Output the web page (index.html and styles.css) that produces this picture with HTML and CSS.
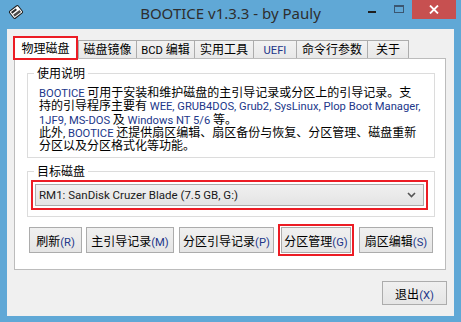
FILE: index.html
```html
<!DOCTYPE html>
<html lang="zh-CN">
<head>
  <meta charset="UTF-8">
  <title>BOOTICE v1.3.3 - by Pauly</title>
  <link rel="stylesheet" href="styles.css">
</head>
<body>

<div class="window">
  <div class="titlebar">
    <div class="tb-left">
      <svg class="app-icon" width="16" height="14" viewBox="0 0 16 14">
        <g transform="rotate(-38 8 7)">
          <rect x="2.5" y="2.5" width="11" height="9" rx="1.5" fill="#fff" stroke="#1d1d1d"/>
          <rect x="4" y="4" width="6" height="2" fill="#2a2a2a"/>
          <rect x="4" y="7.5" width="8" height="2.5" fill="#4a4a4a"/>
        </g>
      </svg>
    </div>
    <div class="title">BOOTICE v1.3.3 - by Pauly</div>
    <div class="controls">
      <span class="ctl min"><i></i></span>
      <span class="ctl max"><i></i></span>
      <span class="ctl close">
        <svg width="10" height="9" viewBox="0 0 10 9">
          <path d="M1 0.5 L9 8.5 M9 0.5 L1 8.5" stroke="#fff" stroke-width="1.8"/>
        </svg>
      </span>
    </div>
  </div>

  <div class="client">
    <div class="tabs">
      <div class="tab active">物理磁盘</div>
      <div class="tab t2">磁盘镜像</div>
      <div class="tab t3"><span class="en">BCD</span> 编辑</div>
      <div class="tab t4">实用工具</div>
      <div class="tab t5"><span class="lat">UEFI</span></div>
      <div class="tab t6">命令行参数</div>
      <div class="tab t7">关于</div>
    </div>

    <div class="panel">
      <fieldset class="group usage">
        <legend>使用说明</legend>
        <div class="desc">
          <div class="line"><span class="lat">BOOTICE</span> 可用于安装和维护磁盘的主引导记录或分区上的引导记录。支</div>
          <div class="line">持的引导程序主要有 <span class="lat">WEE, GRUB4DOS, Grub2, SysLinux, Plop Boot Manager,</span></div>
          <div class="line"><span class="lat">1JF9, MS-DOS</span> 及 <span class="lat">Windows NT 5/6</span> 等。</div>
          <div class="line">此外<span class="en">,</span> <span class="lat">BOOTICE</span> 还提供扇区编辑、扇区备份与恢复、分区管理、磁盘重新</div>
          <div class="line">分区以及分区格式化等功能。</div>
        </div>
      </fieldset>

      <fieldset class="group target">
        <legend>目标磁盘</legend>
        <div class="combo">
          <span class="en">RM1: SanDisk Cruzer Blade (7.5 GB, G:)</span>
          <svg class="chev" width="9" height="6" viewBox="0 0 9 6">
            <path d="M1 1 L4.5 4.5 L8 1" fill="none" stroke="#555" stroke-width="1.6"/>
          </svg>
        </div>
      </fieldset>

      <div class="actions">
        <button class="btn b-refresh">刷新<span class="lat">(R)</span></button>
        <button class="btn b-mbr">主引导记录<span class="lat">(M)</span></button>
        <button class="btn b-pbr">分区引导记录<span class="lat">(P)</span></button>
        <button class="btn b-part marked">分区管理<span class="lat">(G)</span></button>
        <button class="btn b-sector">扇区编辑<span class="lat">(S)</span></button>
      </div>
    </div>

    <div class="footer">
      <button class="btn b-exit">退出<span class="lat">(X)</span></button>
    </div>
  </div>
</div>

</body>
</html>
```

FILE: styles.css
```css
* {
  box-sizing: border-box;
}
body {
  margin: 0;
  font-family: "Noto Sans CJK SC", sans-serif;
  font-size: 12px;
  color: #000;
}
.window {
  width: 461px;
  height: 322px;
  background: #60a8d6;
  display: flex;
  flex-direction: column;
}

/* title bar */
.titlebar {
  height: 29px;
  display: grid;
  grid-template-columns: 1fr auto 1fr;
}
.tb-left {
  padding: 5px 0 0 8px;
}
.app-icon {
  display: block;
}
.title {
  font-family: "Noto Sans", sans-serif;
  font-size: 15px;
  color: #2e2e2e;
  line-height: 27px;
}
.controls {
  display: flex;
  justify-content: flex-end;
  padding-right: 5px;
}
.ctl {
  height: 19px;
  display: flex;
  align-items: center;
  justify-content: center;
}
.ctl.min {
  width: 26px;
}
.ctl.min i {
  width: 8px;
  height: 2px;
  margin-top: 5px;
  background: #1f1f1f;
}
.ctl.max {
  width: 27px;
}
.ctl.max i {
  width: 10px;
  height: 8px;
  margin-top: -2px;
  border: 1px solid #3b5670;
  border-top-width: 2px;
}
.ctl.close {
  width: 44px;
  background: #c75050;
}

/* client area */
.client {
  flex: 1;
  margin: 0 7px 6px;
  background: #f0f0f0;
  padding: 8px 8px 0 7px;
}
/* latin runs: a narrower face than the CJK font's own latin */
.en,
.lat {
  font-family: Roboto, sans-serif;
  font-size: 11.2px;
}
.lat {
  color: #22378a;
}

.tabs {
  display: flex;
  align-items: flex-end;
  height: 21px;
}
.tab {
  height: 18px;
  line-height: 16px;
  text-align: center;
  background: linear-gradient(#f2f2f2, #e8e8e8);
  border: 1px solid #acacac;
  border-bottom: none;
  margin-left: -1px;
  white-space: nowrap;
}
.tab.active {
  position: relative;
  z-index: 1;
  width: 63px;
  height: 22px;
  line-height: 19px;
  margin: 0 0 -1px 0;
  background: #fff;
  outline: 2px solid #ec1c24;
  outline-offset: -1px;
}
.tab.t2 { width: 59px; margin-left: 1px; }
.tab.t3 { width: 59px; }
.tab.t4 { width: 60px; }
.tab.t5 { width: 44px; }
.tab.t6 { width: 72px; }
.tab.t7 { width: 42px; }

.panel {
  height: 212px;
  background: #fff;
  border: 1px solid #bcbcbc;
  padding: 6px 10px 0 12px;
}

.group {
  margin: 0;
  border: 1px solid #dcdcdc;
  min-width: 0;
}
.group legend {
  padding: 0 3px;
  line-height: 16px;
}
.usage {
  padding: 4px 8px 6px 11px;
}
.usage legend {
  margin-left: -5px;
}
.desc .line {
  height: 13.3px;
  line-height: 13.3px;
  white-space: nowrap;
}
.target {
  margin-top: 5px;
  padding: 5px 10px 10px 7px;
}
.target legend {
  margin-left: -1px;
}
.combo {
  height: 22px;
  background: linear-gradient(#f0f0f0, #e4e4e4);
  border: 1px solid #acacac;
  outline: 2px solid #ec1c24;
  outline-offset: 2px;
  display: flex;
  align-items: center;
  justify-content: space-between;
  padding: 0 7px 0 3px;
  color: #1a1a1a;
}
.combo .en {
  font-size: 11.5px;
}

.btn {
  font: inherit;
  color: #000;
  height: 26px;
  padding: 0;
  background: linear-gradient(#f0f0f0, #e5e5e5);
  border: 1px solid #acacac;
  white-space: nowrap;
}
.actions {
  display: flex;
  margin: 10px 0 0 2px;
}
.b-refresh { width: 53px; }
.b-mbr { width: 88px; margin-left: 4px; }
.b-pbr { width: 95px; margin-left: 5px; }
.b-part { width: 70px; margin-left: 7px; }
.b-sector { width: 74px; margin-left: 8px; }
.marked {
  outline: 2px solid #ec1c24;
  outline-offset: 1px;
}

.footer {
  display: flex;
  justify-content: flex-end;
  margin: 11px -1px 0 0;
}
.b-exit {
  width: 65px;
  height: 24px;
}
```
